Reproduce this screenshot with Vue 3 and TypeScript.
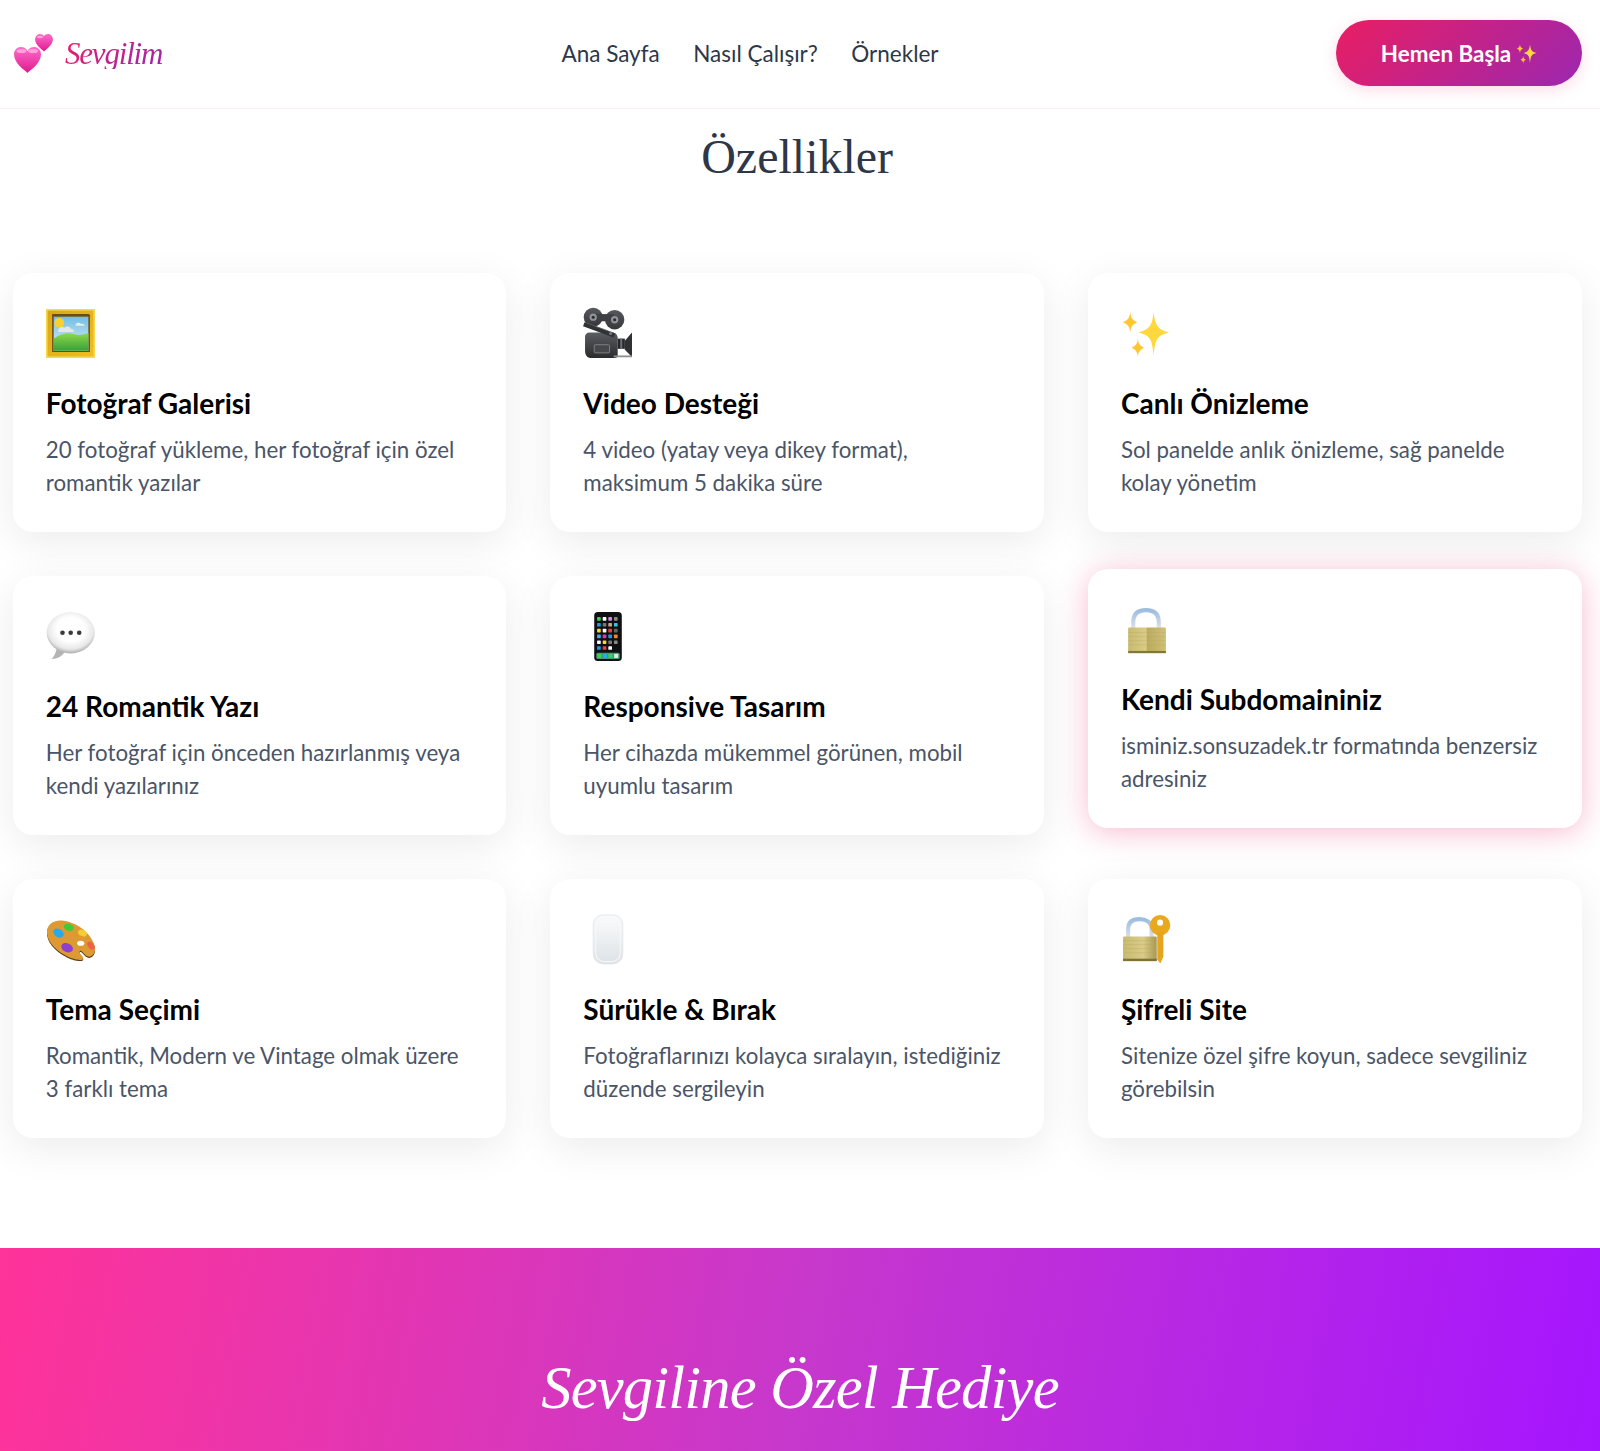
<script setup lang="ts">
interface Feature {
  icon: string
  title: string
  text: string[]
  featured?: boolean
}

const features: Feature[] = [
  { icon: 'frame', title: 'Fotoğraf Galerisi', text: ['20 fotoğraf yükleme, her fotoğraf için özel', 'romantik yazılar'] },
  { icon: 'camera', title: 'Video Desteği', text: ['4 video (yatay veya dikey format),', 'maksimum 5 dakika süre'] },
  { icon: 'sparkles', title: 'Canlı Önizleme', text: ['Sol panelde anlık önizleme, sağ panelde', 'kolay yönetim'] },
  { icon: 'bubble', title: '24 Romantik Yazı', text: ['Her fotoğraf için önceden hazırlanmış veya', 'kendi yazılarınız'] },
  { icon: 'phone', title: 'Responsive Tasarım', text: ['Her cihazda mükemmel görünen, mobil', 'uyumlu tasarım'] },
  { icon: 'lock', title: 'Kendi Subdomaininiz', text: ['isminiz.sonsuzadek.tr formatında benzersiz', 'adresiniz'], featured: true },
  { icon: 'palette', title: 'Tema Seçimi', text: ['Romantik, Modern ve Vintage olmak üzere', '3 farklı tema'] },
  { icon: 'mouse', title: 'Sürükle & Bırak', text: ['Fotoğraflarınızı kolayca sıralayın, istediğiniz', 'düzende sergileyin'] },
  { icon: 'lockkey', title: 'Şifreli Site', text: ['Sitenize özel şifre koyun, sadece sevgiliniz', 'görebilsin'] },
]

const phoneColors: string[] = [
  '#3ecf5a', '#ffffff', '#d68ae0', '#8a8a8a',
  '#1e9be8', '#777777', '#c9a88a', '#35c6d8',
  '#f7d62e', '#ffffff', '#e8433a', '#666666',
  '#35b5e8', '#d838c0', '#1e9be8', '#f08a1e',
  '#ffffff', '#f7d62e', '#777777', '#888888',
  '#1e9be8', '#e8433a', '#ffffff', '#111111',
]
</script>

<template>
  <div class="page">
    <header class="nav">
      <a class="brand">
        <svg class="hearts" viewBox="0 0 40 40" aria-hidden="true">
          <defs>
            <linearGradient id="heartFill" x1="0" y1="0" x2="0" y2="1">
              <stop offset="0" stop-color="#ff6ccb" />
              <stop offset="1" stop-color="#dd1a8e" />
            </linearGradient>
          </defs>
          <path fill="url(#heartFill)" d="M31 18.500c-1.400-1.600-9-6.600-8.900-12C22.200 3 24.700 1 27 1c1.800 0 3.200 .9 4 2.300C31.800 1.900 33.200 1 35 1c2.400 0 4.900 2 4.900 5.500 0 5.400-7.500 10.400-8.900 12z" />
          <path fill="url(#heartFill)" d="M14.500 40C12.300 37.500 1 30.500 1 21.500 1 16.500 4.500 14 8 14c2.900 0 5.200 1.600 6.500 4C15.800 15.600 18.100 14 21 14c3.500 0 7 2.500 7 7.500 0 9-11.300 16-13.500 18.500z" />
          <ellipse cx="8.500" cy="18" rx="5" ry="2" fill="#ffb3e3" opacity=".8" />
          <ellipse cx="20" cy="18" rx="5" ry="2" fill="#ffb3e3" opacity=".8" />
          <ellipse cx="27" cy="4" rx="3" ry="1.200" fill="#ffb3e3" opacity=".8" />
        </svg>
        <span class="logo-text">Sevgilim</span>
      </a>
      <nav class="links">
        <a>Ana Sayfa</a>
        <a>Nasıl Çalışır?</a>
        <a>Örnekler</a>
      </nav>
      <button class="cta" type="button">
        Hemen Başla
        <svg class="cta-spark" viewBox="0 0 48 48" aria-hidden="true">
          <path fill="#ffd83d" d="M32 3c1.500 13 3.500 17 15 20-11.500 3-13.500 6-15 23-1.500-17-3.500-20-15-23 11.500-3 13.500-7 15-20z" />
          <path fill="#ffc72e" d="M9 3c.8 6 1.800 7.500 7 10-5.200 2.500-6.200 4-7 10-.8-6-1.800-7.500-7-10 5.200-2.500 6.200-4 7-10zM16.500 29c.6 5 1.400 6.500 6 9-4.600 2.500-5.400 4-6 9-.6-5-1.400-6.500-6-9 4.600-2.500 5.400-4 6-9z" />
        </svg>
      </button>
    </header>

    <main class="features">
      <h2 class="section-title">Özellikler</h2>
      <div class="grid">
        <article v-for="f in features" :key="f.title" class="card" :class="{ featured: f.featured }">
          <div class="icon">
            <svg v-if="f.icon === 'frame'" viewBox="0 0 48 48" aria-hidden="true">
              <defs>
                <linearGradient id="sky" x1="0" y1="0" x2="0" y2="1"><stop offset="0" stop-color="#6fbfe6" /><stop offset="1" stop-color="#dfeef3" /></linearGradient>
                <linearGradient id="grass" x1="0" y1="0" x2="0" y2="1"><stop offset="0" stop-color="#8fd94a" /><stop offset="1" stop-color="#35a13a" /></linearGradient>
                <linearGradient id="gold" x1="0" y1="0" x2="1" y2="1"><stop offset="0" stop-color="#d9a516" /><stop offset="1" stop-color="#eebf25" /></linearGradient>
              </defs>
              <rect width="48" height="48" fill="url(#gold)" />
              <rect x=".8" y=".8" width="46.400" height="46.400" fill="none" stroke="#f6d84f" stroke-width="1.600" />
              <path d="M6 5h36l1 1v36H6z" fill="#6e4b0e" />
              <rect x="7.500" y="7.500" width="34" height="33.500" fill="url(#sky)" />
              <circle cx="13" cy="13.500" r="4.800" fill="#f8d130" />
              <path d="M12 20c1-3 5-3 6-1.500 2-2.500 6-1.500 6.500 1 2 0 3 1.500 3 3H12z" fill="#e3e6ec" />
              <path d="M29 15c1-2 4-2 5-.5 2-.5 4 .5 4 2h-9z" fill="#e8ebf0" />
              <path d="M7.500 29c8-5 14-6 19-4.500s10 1 15-1V41h-34z" fill="url(#grass)" />
            </svg>

            <svg v-else-if="f.icon === 'camera'" viewBox="0 0 48 48" aria-hidden="true">
              <defs>
                <linearGradient id="camBody" x1="0" y1="0" x2="0" y2="1"><stop offset="0" stop-color="#5a5d61" /><stop offset="1" stop-color="#2a2b2e" /></linearGradient>
                <linearGradient id="camReel" x1="0" y1="0" x2="0" y2="1"><stop offset="0" stop-color="#55585c" /><stop offset="1" stop-color="#35373a" /></linearGradient>
              </defs>
              <circle cx="10" cy="8" r="9.300" fill="url(#camReel)" />
              <circle cx="31" cy="10.500" r="9.500" fill="url(#camReel)" />
              <rect x="12" y="5" width="18" height="7" fill="#3d3f42" />
              <circle cx="10" cy="8" r="3.600" fill="#8f9296" /><circle cx="10" cy="8" r="1.500" fill="#2a2b2d" />
              <circle cx="31" cy="10.500" r="3.600" fill="#8f9296" /><circle cx="31" cy="10.500" r="1.500" fill="#2a2b2d" />
              <path d="M6 23h22c4 0 6 2 6 6v16c0 2-1 3-3 3H7c-3 0-5-3-5-7V27c0-2 2-4 4-4z" fill="url(#camBody)" />
              <path d="M1.500 13l30 11-1.500 4L0 17z" fill="#313236" />
              <path d="M3 13.500l27 10" stroke="#5a5c60" stroke-width=".8" />
              <circle cx="27" cy="24" r="1.500" fill="#77797d" />
              <rect x="11" y="35" width="15" height="8" rx="1" fill="#45474b" stroke="#8b8d91" stroke-width=".8" />
              <rect x="34" y="29" width="7" height="10" fill="#26272a" />
              <rect x="36.500" y="29" width="2" height="10" fill="#6d6f73" />
              <path d="M41 31l7-8v24l-7-7z" fill="#2f3134" />
              <rect x="30" y="45.500" width="18" height="1.800" fill="#8c8e92" />
            </svg>

            <svg v-else-if="f.icon === 'sparkles'" viewBox="0 0 48 48" aria-hidden="true">
              <path fill="#ffd83d" d="M32 3c1.500 13 3.500 17 15 20-11.500 3-13.500 6-15 23-1.500-17-3.500-20-15-23 11.500-3 13.500-7 15-20z" />
              <path fill="#ffc72e" d="M9 3c.8 6 1.800 7.500 7 10-5.200 2.500-6.200 4-7 10-.8-6-1.800-7.500-7-10 5.200-2.500 6.200-4 7-10zM16.500 29c.6 5 1.400 6.500 6 9-4.600 2.500-5.400 4-6 9-.6-5-1.400-6.500-6-9 4.600-2.500 5.400-4 6-9z" />
            </svg>

            <svg v-else-if="f.icon === 'bubble'" viewBox="0 0 49 49" aria-hidden="true">
              <defs>
                <radialGradient id="bubbleFill" cx=".5" cy=".42" r=".58"><stop offset=".5" stop-color="#ffffff" /><stop offset=".82" stop-color="#e8e8e8" /><stop offset="1" stop-color="#adadad" /></radialGradient>
              </defs>
              <path fill="#b4b4b4" d="M11 34c-.5 5-2 9.500-5.500 13 6 0 11-3 14-8z" />
              <ellipse cx="24.700" cy="20.700" rx="24" ry="20.700" fill="url(#bubbleFill)" />
              <circle cx="16.500" cy="20.700" r="2.300" fill="#3a3a3a" />
              <circle cx="24.700" cy="20.700" r="2.300" fill="#3a3a3a" />
              <circle cx="33.200" cy="20.700" r="2.300" fill="#3a3a3a" />
            </svg>

            <svg v-else-if="f.icon === 'phone'" viewBox="0 0 48 48" aria-hidden="true">
              <rect x="11" y="0" width="27" height="48" rx="3.500" fill="#101012" />
              <template v-for="(c, i) in phoneColors" :key="i">
                <rect :x="13.800 + (i % 4) * 5.500" :y="5 + Math.floor(i / 4) * 5.700" width="3.600" height="3.600" rx=".7" :fill="c" />
              </template>
              <rect x="13" y="40" width="23" height="6" rx="1.500" fill="#3e9a72" />
              <rect x="14" y="41" width="4" height="4" fill="#3ecf5a" /><rect x="19.500" y="41" width="4" height="4" fill="#1eb0e8" /><rect x="25" y="41" width="4" height="4" fill="#3ecf5a" /><rect x="30.500" y="41" width="4" height="4" fill="#e5e5e5" />
            </svg>

            <svg v-else-if="f.icon === 'lock'" viewBox="0 0 48 48" aria-hidden="true">
              <defs>
                <linearGradient id="brass" x1="0" y1="0" x2="1" y2="0"><stop offset="0" stop-color="#c8ba6f" /><stop offset=".48" stop-color="#d9cc88" /><stop offset=".5" stop-color="#bbab5f" /><stop offset="1" stop-color="#cfc078" /></linearGradient>
                <linearGradient id="shackle" x1="0" y1="0" x2="0" y2="1"><stop offset="0" stop-color="#9dbde0" /><stop offset="1" stop-color="#e1e4e8" /></linearGradient>
              </defs>
              <path d="M12 24V17C12 8.500 17 5 24.500 5S37 8.500 37 17v7" fill="none" stroke="url(#shackle)" stroke-width="4" />
              <rect x="7" y="22" width="37" height="25" rx="1.200" fill="url(#brass)" />
              <path d="M7 27h37M7 31h37M7 35h37M7 39h37" stroke="#b5a55a" stroke-width=".5" opacity=".6" />
              <rect x="7" y="45" width="37" height="2.200" fill="#84763a" />
            </svg>

            <svg v-else-if="f.icon === 'palette'" viewBox="0 0 48 48" aria-hidden="true">
              <path fill="#5b3a16" transform="translate(0 1.200)" d="M1 15C2 8 9 4.500 16 5.500 28 7 40 14 46 26c3 6 3 12-2 14.500-3 1.500-6-1.500-8.500-4.500-1.500-1.500-3-1-2.500 1 1 2 4 4 3.500 6-1 2-10.500 1-18.500-4C9 34 0 25 1 15z" />
              <path fill="#dd9a33" d="M1 15C2 8 9 4.500 16 5.500 28 7 40 14 46 26c3 6 3 12-2 14.500-3 1.500-6-1.500-8.500-4.500-1.500-1.500-3-1-2.500 1 1 2 4 4 3.500 6-1 2-10.500 1-18.500-4C9 34 0 25 1 15z" />
              <ellipse cx="12.300" cy="17.700" rx="5.500" ry="4" transform="rotate(35 12.300 17.700)" fill="#29a9e8" />
              <ellipse cx="22.300" cy="12" rx="5" ry="3.500" transform="rotate(20 22.300 12)" fill="#3ecb38" />
              <ellipse cx="35.700" cy="17.700" rx="4.500" ry="3" transform="rotate(25 35.700 17.700)" fill="#f5cf2f" />
              <ellipse cx="20.700" cy="32" rx="6" ry="4.300" transform="rotate(25 20.700 32)" fill="#8f3fd0" />
              <ellipse cx="44" cy="30" rx="4.500" ry="2.800" transform="rotate(50 44 30)" fill="#f0604a" />
              <ellipse cx="34" cy="27.700" rx="3.500" ry="2.500" fill="#ffffff" />
            </svg>

            <svg v-else-if="f.icon === 'mouse'" viewBox="0 0 48 48" aria-hidden="true">
              <defs>
                <linearGradient id="mouseFill" x1="0" y1="0" x2="0" y2="1"><stop offset="0" stop-color="#fbfbfc" /><stop offset="1" stop-color="#dde2e6" /></linearGradient>
              </defs>
              <rect x="10" y="0" width="29" height="48" rx="10" fill="url(#mouseFill)" stroke="#e6e8ea" />
              <rect x="12.500" y="2.500" width="24" height="43" rx="8" fill="none" stroke="#f7f8f9" />
            </svg>

            <svg v-else-if="f.icon === 'lockkey'" viewBox="0 0 48 48" aria-hidden="true">
              <defs>
                <linearGradient id="brass2" x1="0" y1="0" x2="1" y2="0"><stop offset="0" stop-color="#c8ba6f" /><stop offset=".6" stop-color="#d9cc88" /><stop offset="1" stop-color="#a8974f" /></linearGradient>
                <linearGradient id="shackle2" x1="0" y1="0" x2="0" y2="1"><stop offset="0" stop-color="#9dbde0" /><stop offset="1" stop-color="#e1e4e8" /></linearGradient>
              </defs>
              <path d="M7 24V14C7 6.500 12 4 18 4s12 2.500 12 10v10" fill="none" stroke="url(#shackle2)" stroke-width="4" />
              <rect x="2" y="21" width="33" height="24" rx="1.200" fill="url(#brass2)" />
              <path d="M2 25h33M2 29h33M2 33h33M2 37h33" stroke="#b5a55a" stroke-width=".5" opacity=".6" />
              <rect x="2" y="42.800" width="33" height="2.400" fill="#7f7236" />
              <circle cx="38.300" cy="10" r="10" fill="#eaa81f" />
              <path fill="#e6a51e" d="M35.500 17h6v24l-3 6.500-3-4z" />
              <circle cx="38.300" cy="7.500" r="3" fill="#fff" />
            </svg>
          </div>
          <h3 class="card-title">{{ f.title }}</h3>
          <p class="card-text">
            <span v-for="line in f.text" :key="line" class="line">{{ line }}</span>
          </p>
        </article>
      </div>
    </main>

    <footer class="banner">
      <h1 class="banner-title">Sevgiline Özel Hediye</h1>
    </footer>
  </div>
</template>

<style>
html, body { margin: 0; background: #fff; }
</style>

<style scoped>
.page {
  width: 1600px;
  height: 1451px;
  overflow: hidden;
  background: #fff;
  font-family: "Lato", "Noto Sans", sans-serif;
  color: #4a5568;
  box-sizing: border-box;
}
.nav {
  height: 109px;
  box-sizing: border-box;
  border-bottom: 1px solid #fdeef2;
  padding: 0 18px 2px 13px;
  display: flex;
  align-items: center;
  justify-content: space-between;
}
.brand {
  width: 151px;
  display: flex;
  align-items: center;
  gap: 12px;
}
.hearts {
  width: 40px;
  height: 40px;
  flex: none;
}
.logo-text {
  font-family: "Liberation Serif", serif;
  font-style: italic;
  font-size: 31px;
  line-height: 1;
  letter-spacing: -1.2px;
  background: linear-gradient(135deg, #e91e63, #9c27b0);
  -webkit-background-clip: text;
  background-clip: text;
  color: transparent;
}
.links {
  display: flex;
  gap: 33.500px;
  font-size: 22.500px;
  color: #2d3748;
}
.cta {
  width: 246px;
  height: 66px;
  border: 0;
  border-radius: 33px;
  background: linear-gradient(135deg, #e91e63, #9c27b0);
  box-shadow: 0 4px 15px rgba(233, 30, 99, 0.15);
  color: #fff;
  font-family: inherit;
  font-weight: 700;
  font-size: 22.400px;
  display: flex;
  align-items: center;
  justify-content: center;
  gap: 5px;
}
.cta-spark {
  width: 21px;
  height: 21px;
}
.features {
  height: 1139px;
  box-sizing: border-box;
  padding: 0 18.500px 0 12.800px;
}
.section-title {
  margin: 0;
  padding-top: 16px;
  height: 163.500px;
  box-sizing: border-box;
  text-align: center;
  font-family: "Liberation Serif", serif;
  font-weight: 400;
  font-size: 48px;
  line-height: 64px;
  color: #2d3748;
}
.grid {
  display: grid;
  grid-template-columns: repeat(3, 1fr);
  column-gap: 44px;
  row-gap: 44px;
}
.card {
  height: 259px;
  box-sizing: border-box;
  padding: 36px 33px 0;
  background: #fff;
  border-radius: 20px;
  box-shadow: 0 10px 40px rgba(0, 0, 0, 0.08);
}
.card.featured {
  transform: translateY(-7px);
  box-shadow: 0 4px 30px rgba(233, 30, 99, 0.3);
}
.icon {
  width: 49px;
  height: 49px;
  margin-bottom: 28px;
}
.icon svg {
  display: block;
  width: 49px;
  height: 49px;
  overflow: visible;
}
.card-title {
  margin: 0 0 13px;
  font-size: 28px;
  line-height: 34px;
  font-weight: 700;
  color: #000;
}
.card-text {
  margin: 0;
  font-size: 22.300px;
  line-height: 33px;
  color: #4a5568;
}
.line {
  display: block;
  white-space: nowrap;
}
.banner {
  height: 203px;
  background: linear-gradient(100deg, #ff3399, #c738cc 50%, #a515ff);
  display: flex;
  justify-content: center;
  align-items: flex-start;
  box-sizing: border-box;
  padding-top: 95px;
}
.banner-title {
  margin: 0;
  font-family: "Liberation Serif", serif;
  font-style: italic;
  font-weight: 400;
  font-size: 60.500px;
  line-height: 90px;
  letter-spacing: -.8px;
  color: #fff;
}
</style>
